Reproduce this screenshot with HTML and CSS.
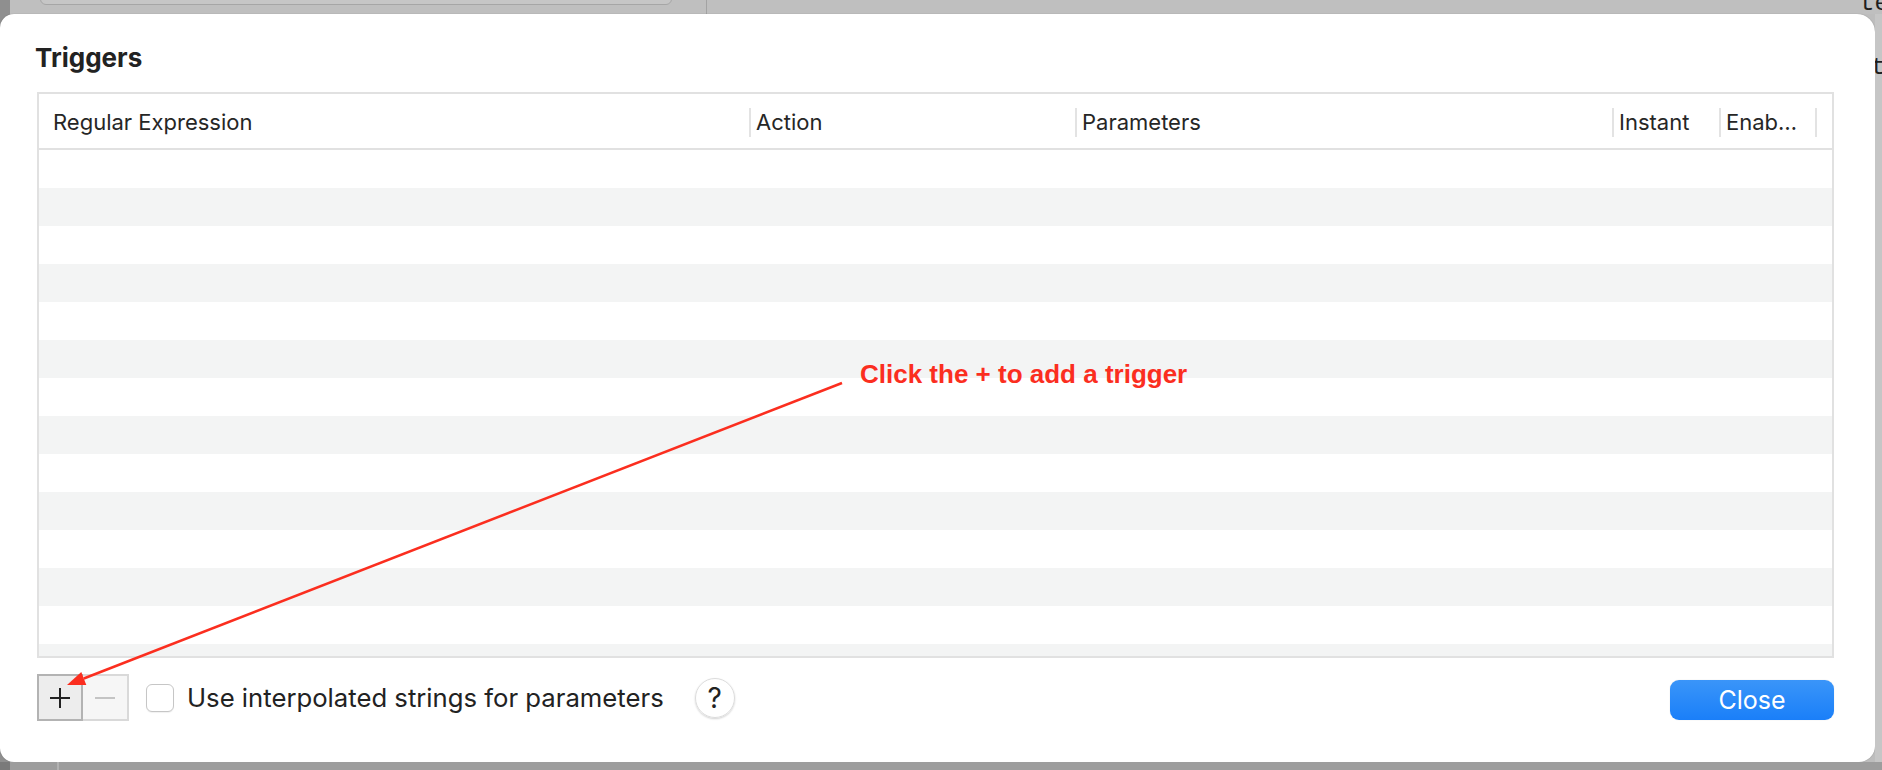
FILE: index.html
```html
<!DOCTYPE html>
<html>
<head>
<meta charset="utf-8">
<title>Triggers</title>
<link rel="stylesheet" href="styles.css">
</head>
<body>
<div class="desk">
  <div class="top-band">
    <div class="edge"></div>
    <div class="field"></div>
    <div class="divider"></div>
    <div class="spacer"></div>
    <span class="bg-text">te</span>
  </div>
  <div class="middle">
    <div class="sheet">
      <h1 class="title">Triggers</h1>
      <div class="table">
        <div class="thead">
          <div class="th first">Regular Expression</div>
          <div class="th">Action</div>
          <div class="th">Parameters</div>
          <div class="th">Instant</div>
          <div class="th">Enab…</div>
          <div class="th"></div>
        </div>
        <div class="tbody">
          <div class="row"></div><div class="row"></div><div class="row"></div><div class="row"></div>
          <div class="row"></div><div class="row"></div><div class="row"></div><div class="row"></div>
          <div class="row"></div><div class="row"></div><div class="row"></div><div class="row"></div>
          <div class="row"></div><div class="row"></div>
        </div>
      </div>
      <div class="bar">
        <div class="seg">
          <div class="seg-btn plus">
            <svg width="22" height="22" viewBox="0 0 22 22"><path d="M11 1V21M1 11H21" stroke="#222" stroke-width="2" fill="none"/></svg>
          </div>
          <div class="seg-btn minus">
            <svg width="22" height="22" viewBox="0 0 22 22"><path d="M1 11H21" stroke="#c4c4c4" stroke-width="2" fill="none"/></svg>
          </div>
        </div>
        <div class="checkbox"></div>
        <span class="label">Use interpolated strings for parameters</span>
        <div class="help">?</div>
        <div class="close">Close</div>
      </div>
    </div>
    <div class="right-strip"><span>t</span></div>
  </div>
  <div class="bottom-band">
    <div class="edge"></div>
    <div class="bline"></div>
  </div>
</div>
<svg class="annotation" width="1882" height="770" viewBox="0 0 1882 770">
  <line x1="842" y1="383" x2="83.8" y2="678.5" stroke="#fb2e1f" stroke-width="2.5"/>
  <polygon points="67,685 86.3,685 81.3,672" fill="#fb2e1f"/>
  <text class="note" x="860" y="383">Click the + to add a trigger</text>
</svg>
</body>
</html>
```

FILE: styles.css
```css
* { box-sizing: border-box; }
html, body { margin: 0; padding: 0; }
body {
  width: 1882px;
  height: 770px;
  overflow: hidden;
  position: relative;
  background: #bdbdbd;
  font-family: "Inter", "Liberation Sans", sans-serif;
  color: #262626;
}
.desk { display: flex; flex-direction: column; height: 770px; }

.top-band {
  height: 14px;
  display: flex;
  overflow: hidden;
  background: #bfbfbf;
  flex: none;
}
.top-band .edge { width: 10px; background: #8f8f8f; flex: none; }
.field {
  width: 632px;
  height: 20px;
  margin-top: -15px;
  margin-left: 30px;
  border: 1px solid #a6a6a6;
  border-radius: 6px;
  background: #c6c6c6;
  flex: none;
}
.divider { width: 1px; margin-left: 34px; background: #a3a3a3; flex: none; }
.spacer { flex: 1; }
.bg-text {
  width: 22px;
  overflow: hidden;
  font-family: "Liberation Mono", monospace;
  font-size: 24px;
  line-height: 14px;
  margin-top: -3px;
  color: #1e1e1e;
  white-space: nowrap;
}

.middle { display: flex; height: 748px; flex: none; background: linear-gradient(90deg, #8f8f8f 0 10px, #bdbdbd 10px); }
.sheet {
  width: 1875px;
  height: 748px;
  background: #fff;
  border-radius: 14px 18px 16px 14px;
  box-shadow: 0 0 1px rgba(0,0,0,0.35);
  padding: 29px 41px 0 37px;
  flex: none;
}
.right-strip {
  flex: 1;
  background: #c6c6c6;
  overflow: hidden;
}
.right-strip span {
  display: block;
  margin-top: 40px;
  margin-left: -4px;
  font-family: "Liberation Mono", monospace;
  font-size: 24px;
  color: #1e1e1e;
}

.title {
  margin: 0 0 19px -2px;
  font-size: 26px;
  line-height: 30px;
  font-weight: 700;
  color: #222;
}

.table {
  width: 1797px;
  height: 566px;
  border: 2px solid #e1e1e1;
}
.thead {
  display: grid;
  grid-template-columns: 710px 326px 537px 107px 96px 1fr;
  align-items: center;
  height: 56px;
  padding-top: 2px;
  border-bottom: 2px solid #e1e1e1;
}
.th {
  height: 29px;
  display: flex;
  align-items: center;
  border-left: 2px solid #e3e3e3;
  padding-left: 5px;
  font-size: 22px;
  white-space: nowrap;
  overflow: hidden;
}
.th.first { border-left: 0; padding-left: 14px; }
.tbody { height: 506px; overflow: hidden; }
.row { height: 38px; }
.row:nth-child(even) { background: #f3f4f4; }

.bar {
  display: flex;
  align-items: center;
  height: 47px;
  margin-top: 16px;
}
.seg { display: flex; }
.seg-btn {
  width: 46px;
  height: 47px;
  display: flex;
  align-items: center;
  justify-content: center;
}
.seg-btn.plus { background: #ededed; border: 2px solid #b3b3b3; }
.seg-btn.minus { background: #f6f6f6; border: 2px solid #d9d9d9; border-left: 0; }
.checkbox {
  width: 28px;
  height: 28px;
  margin-left: 17px;
  border: 1px solid #c6c6c6;
  border-radius: 6px;
  background: #fff;
  box-shadow: 0 1px 1px rgba(0,0,0,0.06);
}
.label {
  margin-left: 13px;
  font-size: 25.7px;
  color: #222;
  white-space: nowrap;
}
.help {
  width: 40px;
  height: 40px;
  margin-left: 31px;
  border-radius: 50%;
  border: 1px solid #dcdcdc;
  box-shadow: 0 1px 2px rgba(0,0,0,0.18);
  display: flex;
  align-items: center;
  justify-content: center;
  font-size: 28px;
  font-weight: 400;
  color: #222;
}
.close {
  margin-left: auto;
  margin-top: 5px;
  width: 164px;
  height: 40px;
  border-radius: 9px;
  background: linear-gradient(#3a95f9, #1a7ff9);
  color: #fff;
  font-size: 25px;
  display: flex;
  align-items: center;
  justify-content: center;
  box-shadow: 0 0 1px rgba(0,0,0,0.2);
}

.bottom-band { height: 8px; display: flex; background: #9d9d9d; flex: none; }
.bottom-band .edge { width: 10px; background: #7a7a7a; }
.bline { width: 2px; margin-left: 47px; background: #b2b2b2; }

.annotation { position: absolute; left: 0; top: 0; pointer-events: none; }
.note {
  font-family: "Liberation Sans", Arial, sans-serif;
  font-weight: 700;
  font-size: 26px;
  fill: #fb2e1f;
}
```
